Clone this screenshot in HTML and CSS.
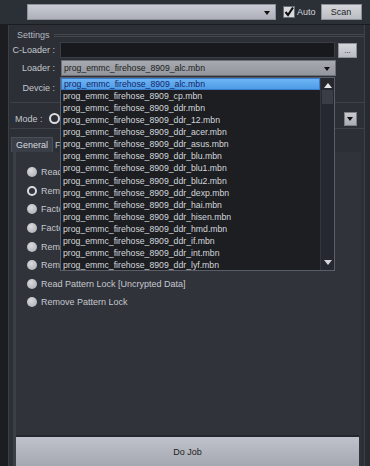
FILE: index.html
```html
<!DOCTYPE html>
<html>
<head>
<meta charset="utf-8">
<link rel="stylesheet" href="styles.css">
</head>
<body>
<div class="app">
  <div class="topbar">
    <div class="combo top-combo"><span class="arrow"></span></div>
    <div class="auto">
      <svg class="check" width="12" height="12" viewBox="0 0 12 12"><rect x="0.5" y="0.5" width="11" height="11" fill="#d9dadd" stroke="#6c6f75"/><path d="M2.5 6 L5 9 L10 1.5" fill="none" stroke="#111" stroke-width="2.2"/></svg>
      <span>Auto</span>
    </div>
    <div class="btn scan">Scan</div>
  </div>
  <div class="main">
    <div class="strip"></div>
    <div class="panel">
      <div class="group">
        <div class="group-title"><span class="gt">Settings</span><span class="gline"></span></div>
        <div class="row r-cloader"><span class="lbl">C-Loader :</span><div class="input"></div><div class="btn dots">...</div></div>
        <div class="row r-loader"><span class="lbl">Loader :</span><div class="combo loader"><span class="ltext">prog_emmc_firehose_8909_alc.mbn</span><span class="arrow"></span></div></div>
        <div class="row r-device"><span class="lbl">Devcie :</span></div>
      </div>
      <div class="mode-row">
        <span class="mlbl">Mode :</span><span class="ring"></span>
        <span class="mcombo"><span class="arrow"></span></span>
      </div>
      <div class="tabs"><span class="tab active">General</span><span class="tab next">Fl</span></div>
      <div class="tabpanel">
        <ul class="options">
          <li><span class="dot"></span>Read</li>
          <li><span class="dot sel"></span>Remo</li>
          <li><span class="dot"></span>Facto</li>
          <li><span class="dot"></span>Facto</li>
          <li><span class="dot"></span>Remo</li>
          <li><span class="dot"></span>Remo</li>
          <li><span class="dot"></span>Read Pattern Lock [Uncrypted Data]</li>
          <li><span class="dot"></span>Remove Pattern Lock</li>
        </ul>
        <div class="dojob">Do Job</div>
      </div>
    </div>
    <div class="rstrip"></div>
  </div>
  <div class="dropdown">
    <ul class="list">
      <li class="selected">prog_emmc_firehose_8909_alc.mbn</li>
      <li>prog_emmc_firehose_8909_cp.mbn</li>
      <li>prog_emmc_firehose_8909_ddr.mbn</li>
      <li>prog_emmc_firehose_8909_ddr_12.mbn</li>
      <li>prog_emmc_firehose_8909_ddr_acer.mbn</li>
      <li>prog_emmc_firehose_8909_ddr_asus.mbn</li>
      <li>prog_emmc_firehose_8909_ddr_blu.mbn</li>
      <li>prog_emmc_firehose_8909_ddr_blu1.mbn</li>
      <li>prog_emmc_firehose_8909_ddr_blu2.mbn</li>
      <li>prog_emmc_firehose_8909_ddr_dexp.mbn</li>
      <li>prog_emmc_firehose_8909_ddr_hai.mbn</li>
      <li>prog_emmc_firehose_8909_ddr_hisen.mbn</li>
      <li>prog_emmc_firehose_8909_ddr_hmd.mbn</li>
      <li>prog_emmc_firehose_8909_ddr_if.mbn</li>
      <li>prog_emmc_firehose_8909_ddr_int.mbn</li>
      <li>prog_emmc_firehose_8909_ddr_lyf.mbn</li>
    </ul>
    <div class="scrollbar">
      <span class="sb-up"></span>
      <span class="sb-thumb"></span>
      <span class="sb-down"></span>
    </div>
  </div>
</div>
</body>
</html>
```

FILE: styles.css
```css
* { box-sizing: border-box; }
html, body { margin: 0; padding: 0; }
body {
  width: 370px;
  height: 466px;
  overflow: hidden;
  background: #1e2126;
  font-family: "Liberation Sans", Arial, sans-serif;
  font-size: 9px;
  color: #c9ccd2;
}
.app { position: relative; width: 370px; height: 466px; display: flex; flex-direction: column; }

.topbar {
  height: 25px;
  flex: none;
  display: flex;
  align-items: center;
  padding-left: 27px;
  background: #2b2f36;
  border-bottom: 1px solid #1a1c20;
}
.combo { position: relative; }
.top-combo {
  width: 249px;
  height: 16px;
  background: linear-gradient(#c8cbd3, #adb0b8);
  border: 1px solid #8e9198;
}
.arrow {
  position: absolute;
  width: 0; height: 0;
  border-left: 3.5px solid transparent;
  border-right: 3.5px solid transparent;
  border-top: 4px solid #111;
}
.top-combo .arrow { right: 5px; top: 6px; }
.auto { display: flex; align-items: center; margin-left: 7px; gap: 2px; color: #d2d5da; }
.check { display: block; }
.btn {
  background: linear-gradient(#d4d6da, #b9bcc2);
  border: 1px solid #8d9097;
  color: #222;
  display: flex; align-items: center; justify-content: center;
}
.scan { width: 41px; height: 16px; margin-left: 5px; }

.main { flex: 1; display: flex; min-height: 0; }
.strip { width: 9px; background: #1b1d21; border-right: 1px solid #3b3f46; }
.panel { flex: 1; display: flex; flex-direction: column; background: #2c2f36; padding-left: 1px; }
.rstrip { width: 6px; background: #272a30; border-left: 1px solid #3d4148; }

.group { padding-top: 5px; border-bottom: 1px solid #3d4148; padding-bottom: 6px; }
.group-title { display: flex; align-items: center; height: 10px; padding-left: 7px; }
.gt { color: #b5b9c0; }
.gline { flex: 1; margin-left: 4px; height: 3px; border-top: 1px solid #43474e; border-bottom: 1px solid #43474e; }
.row { display: flex; align-items: center; height: 16px; }
.r-cloader { margin-top: 2px; }
.r-loader { margin-top: 2px; }
.r-device { margin-top: 4px; }
.lbl { width: 45px; text-align: right; color: #c3c7cd; }
.input { width: 275px; height: 16px; margin-left: 5px; background: #17191d; border: 1px solid #3a3d44; }
.dots { width: 19px; height: 15px; margin-left: 3px; font-size: 8px; }
.loader {
  width: 275px; height: 16px; margin-left: 6px;
  background: linear-gradient(#a6a9af, #93969c);
  border: 1px solid #6d7077;
  color: #1c1d20;
  padding-left: 2px;
  font-size: 8.7px;
  display: flex; align-items: center;
}
.loader .arrow { right: 5px; top: 6px; }

.mode-row { display: flex; align-items: center; height: 20px; margin-top: 6px; padding-left: 5px; border-bottom: 1px solid #3d4148; }
.mlbl { color: #c3c7cd; }
.ring { width: 11px; height: 11px; border-radius: 50%; border: 2px solid #dcdde0; margin-left: 6px; background: #2c2f36; }
.mcombo { position: relative; margin-left: auto; margin-right: 7px; width: 13px; height: 14px; background: linear-gradient(#c9cbd0, #a9acb2); border: 1px solid #7e8188; }
.mcombo .arrow { left: 2px; top: 4px; }

.tabs { display: flex; align-items: flex-end; height: 23px; padding-left: 1px; }
.tab { height: 15px; display: flex; align-items: center; padding: 0 4px; color: #c3c7cd; }
.tab.next { padding-left: 2px; }
.tab.active { background: #3a3e46; border: 1px solid #4a4e56; border-bottom: none; width: 42px; color: #d8dbe0; }

.tabpanel { flex: 1; display: flex; flex-direction: column; background: #30333a; border-left: 3px solid #3a3e45; margin-left: 3px; margin-right: 3px; }
.options { list-style: none; margin: 0; padding: 11px 0 0 11px; flex: 1; }
.options li { height: 18.57px; display: flex; align-items: center; color: #c6c9cf; }
.dot { width: 10px; height: 10px; border-radius: 50%; background: radial-gradient(circle at 40% 35%, #d8dadd, #a6a9ae); margin-right: 4px; }
.dot.sel { background: #30333a; border: 2px solid #d9dbde; }
.dojob {
  height: 31px;
  margin: 0 2px 0 0;
  background: linear-gradient(#bfc2ca, #a5a8b1);
  border-top: 2px solid #24272c;
  color: #1d1e22;
  display: flex; align-items: center; justify-content: center;
}

.dropdown {
  position: absolute;
  left: 60px; top: 77px;
  width: 275px; height: 194px;
  background: #1c1e22;
  border: 1px solid #5a5e66;
  display: flex;
}
.list { list-style: none; margin: 0; padding: 0; flex: 1; font-size: 8.7px; }
.list li { height: 12.07px; line-height: 12px; padding-left: 2px; color: #d4d7dc; white-space: nowrap; overflow: hidden; }
.list li.selected { background: linear-gradient(#6cb4f4, #4e9ce6); color: #15256a; border: 1px solid #3a7bcc; line-height: 10px; }
.scrollbar { width: 14px; position: relative; background: #25282e; border-left: 1px solid #33363c; }
.sb-up { position: absolute; left: 3px; top: 5px; width: 0; height: 0; border-left: 4px solid transparent; border-right: 4px solid transparent; border-bottom: 5px solid #e6e7ea; }
.sb-thumb { position: absolute; left: 1px; right: 1px; top: 12px; height: 14px; background: #3a3d44; }
.sb-down { position: absolute; left: 3px; bottom: 5px; width: 0; height: 0; border-left: 4px solid transparent; border-right: 4px solid transparent; border-top: 5px solid #d4d6da; }
```
